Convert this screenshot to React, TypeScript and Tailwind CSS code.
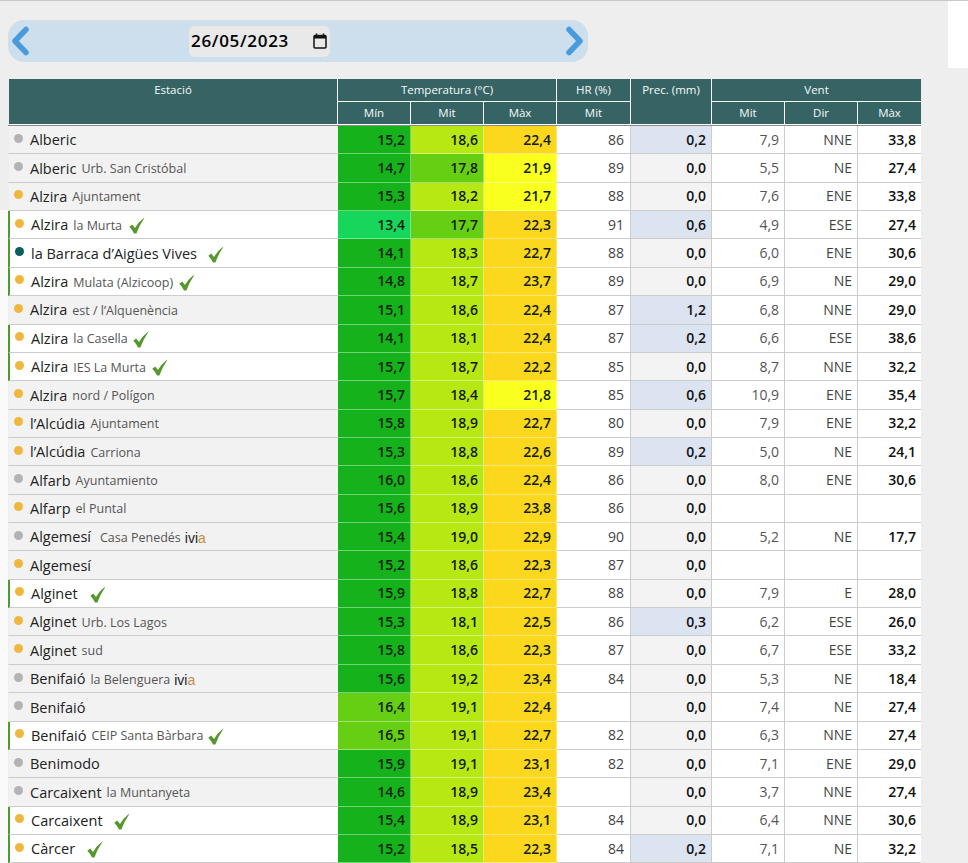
const rows: [string, string, string, boolean, string, string, string, string, string, string, string, string, string, string?][] = [
  ['Alberic', '', 'g', false, '15,2', '18,6', '22,4', '86', '0,2', '7,9', 'NNE', '33,8'],
  ['Alberic', 'Urb. San Cristóbal', 'g', false, '14,7', '17,8', '21,9', '89', '0,0', '5,5', 'NE', '27,4'],
  ['Alzira', 'Ajuntament', 'o', false, '15,3', '18,2', '21,7', '88', '0,0', '7,6', 'ENE', '33,8'],
  ['Alzira', 'la Murta', 'o', true, '13,4', '17,7', '22,3', '91', '0,6', '4,9', 'ESE', '27,4', 'ml-[7px]'],
  ['la Barraca d’Aigües Vives', '', 't', true, '14,1', '18,3', '22,7', '88', '0,0', '6,0', 'ENE', '30,6', 'ml-[11px]'],
  ['Alzira', 'Mulata (Alzicoop)', 'o', true, '14,8', '18,7', '23,7', '89', '0,0', '6,9', 'NE', '29,0', 'ml-[6px]'],
  ['Alzira', 'est / l’Alquenència', 'o', false, '15,1', '18,6', '22,4', '87', '1,2', '6,8', 'NNE', '29,0'],
  ['Alzira', 'la Casella', 'o', true, '14,1', '18,1', '22,4', '87', '0,2', '6,6', 'ESE', '38,6', 'ml-[5px]'],
  ['Alzira', 'IES La Murta', 'o', true, '15,7', '18,7', '22,2', '85', '0,0', '8,7', 'NNE', '32,2', 'ml-[6px]'],
  ['Alzira', 'nord / Polígon', 'o', false, '15,7', '18,4', '21,8', '85', '0,6', '10,9', 'ENE', '35,4'],
  ['l’Alcúdia', 'Ajuntament', 'o', false, '15,8', '18,9', '22,7', '80', '0,0', '7,9', 'ENE', '32,2'],
  ['l’Alcúdia', 'Carriona', 'o', false, '15,3', '18,8', '22,6', '89', '0,2', '5,0', 'NE', '24,1'],
  ['Alfarb', 'Ayuntamiento', 'g', false, '16,0', '18,6', '22,4', '86', '0,0', '8,0', 'ENE', '30,6'],
  ['Alfarp', 'el Puntal', 'o', false, '15,6', '18,9', '23,8', '86', '0,0', '', '', ''],
  ['Algemesí', 'Casa Penedés', 'g', false, '15,4', '19,0', '22,9', '90', '0,0', '5,2', 'NE', '17,7'],
  ['Algemesí', '', 'o', false, '15,2', '18,6', '22,3', '87', '0,0', '', '', ''],
  ['Alginet', '', 'o', true, '15,9', '18,8', '22,7', '88', '0,0', '7,9', 'E', '28,0', 'ml-[12px]'],
  ['Alginet', 'Urb. Los Lagos', 'o', false, '15,3', '18,1', '22,5', '86', '0,3', '6,2', 'ESE', '26,0'],
  ['Alginet', 'sud', 'o', false, '15,8', '18,6', '22,3', '87', '0,0', '6,7', 'ESE', '33,2'],
  ['Benifaió', 'la Belenguera', 'g', false, '15,6', '19,2', '23,4', '84', '0,0', '5,3', 'NE', '18,4'],
  ['Benifaió', '', 'g', false, '16,4', '19,1', '22,4', '', '0,0', '7,4', 'NE', '27,4'],
  ['Benifaió', 'CEIP Santa Bàrbara', 'o', true, '16,5', '19,1', '22,7', '82', '0,0', '6,3', 'NNE', '27,4', 'ml-[5px]'],
  ['Benimodo', '', 'g', false, '15,9', '19,1', '23,1', '82', '0,0', '7,1', 'ENE', '29,0'],
  ['Carcaixent', 'la Muntanyeta', 'g', false, '14,6', '18,9', '23,4', '', '0,0', '3,7', 'NNE', '27,4'],
  ['Carcaixent', '', 'o', true, '15,4', '18,9', '23,1', '84', '0,0', '6,4', 'NNE', '30,6', 'ml-[11px]'],
  ['Càrcer', '', 'o', true, '15,2', '18,5', '22,3', '84', '0,2', '7,1', 'NE', '32,2', 'ml-[12px]'],
];

function tempColor(v: string) {
  const n = parseFloat(v.replace(',', '.'));
  if (n < 14) return 'bg-[#17d65c]';
  if (n < 16.2) return 'bg-[#16b21b]';
  if (n < 18) return 'bg-[#66cf14]';
  if (n < 20) return 'bg-[#b8e814]';
  if (n < 22) return 'bg-[#f9ff1f]';
  return 'bg-[#fbd71e]';
}

function dotColor(d: string) {
  if (d === 'g') return 'bg-[#b3b3b3]';
  if (d === 't') return 'bg-[#075f5f]';
  return 'bg-[#efb73e]';
}

function Check({ className }: { className: string }) {
  return (
    <svg viewBox="0 0 16 17" className={`mt-[2px] h-[17px] w-4 shrink-0 ${className}`}>
      <path d="M0.3 9.8 L3.2 7.6 L6 11 Q9.5 5 14.6 1 L15 1.4 Q10.5 8 7.4 16.4 L5 16.4 Q3 12.5 0.3 9.8 Z" fill="#56982c" />
      <path d="M14.4 1.2 L15.8 0.2 L15 1.6 Z" fill="#b5c9a6" />
    </svg>
  );
}

const th = 'border-r border-b border-white bg-[#366465] bg-clip-padding font-normal text-[11.5px] text-[#f6f9f9] align-middle';
const cell = 'border-r border-b border-[#cccccc] px-[5px] text-right';
const temp = 'border-r border-b border-white/40 px-[5px] text-right font-semibold text-[#102010]';

export default function App() {
  return (
    <div className="relative h-[863px] overflow-hidden border-t border-[#c9c9c9] bg-[#eeeeee] font-['Open_Sans',sans-serif]">
      <div className="flex h-[67px] items-start justify-between">
        <div className="mt-[19px] ml-2 flex h-[42px] w-[580px] items-center rounded-[16px] bg-[#cddfec] pr-[4px] pl-[3px]">
          <svg viewBox="0 0 18 30" className="h-[30px] w-[18px]">
            <path d="M15 3.5 L4 15 L15 26.5" fill="none" stroke="#4a9bdb" strokeWidth="5.5" strokeLinecap="round" strokeLinejoin="round" />
          </svg>
          <div className="ml-[160px] flex h-[31px] w-[141px] items-center justify-between rounded-[6px] bg-[#e9e9e9] pr-[3px] pl-[2px] text-[17px] font-semibold tracking-[0.7px] text-black">
            <span>26/05/2023</span>
            <svg viewBox="0 0 14 16" className="h-[16px] w-[14px]">
              <path d="M3.5 0.5 V3 M10.5 0.5 V3" stroke="#111" strokeWidth="1.5" />
              <rect x="1" y="2.5" width="12" height="12.5" rx="1" fill="none" stroke="#111" strokeWidth="1.5" />
              <rect x="1" y="2.5" width="12" height="3" fill="#111" />
            </svg>
          </div>
          <svg viewBox="0 0 18 30" className="ml-auto h-[30px] w-[18px]">
            <path d="M3 3.5 L14 15 L3 26.5" fill="none" stroke="#4a9bdb" strokeWidth="5.5" strokeLinecap="round" strokeLinejoin="round" />
          </svg>
        </div>
        <div className="h-[67px] w-5 bg-white" />
      </div>

      <div className="absolute top-[209px] bottom-0 left-0 w-2 bg-[#fafafa]" />

      <table className="relative mt-[11px] ml-2 w-[913px] table-fixed border-separate border-spacing-0 text-sm text-[#333]">
        <colgroup>
          <col className="w-[330px]" />
          <col className="w-[73px]" />
          <col className="w-[73px]" />
          <col className="w-[73px]" />
          <col className="w-[74px]" />
          <col className="w-[81px]" />
          <col className="w-[73px]" />
          <col className="w-[73px]" />
          <col className="w-[63px]" />
        </colgroup>
        <thead>
          <tr className="h-[23px]">
            <th rowSpan={2} className={`${th} border-l border-l-transparent pb-[23px]`}>Estació</th>
            <th colSpan={3} className={th}>Temperatura (°C)</th>
            <th className={th}>HR (%)</th>
            <th rowSpan={2} className={`${th} pb-[23px]`}>Prec. (mm)</th>
            <th colSpan={3} className={`${th} border-r-0`}>Vent</th>
          </tr>
          <tr className="h-[23px]">
            <th className={th}>Mín</th>
            <th className={th}>Mit</th>
            <th className={th}>Màx</th>
            <th className={th}>Mit</th>
            <th className={th}>Mit</th>
            <th className={th}>Dir</th>
            <th className={`${th} border-r-0`}>Màx</th>
          </tr>
          <tr className="h-px">
            <th colSpan={9} className="bg-[#8a8a8a] p-0" />
          </tr>
        </thead>
        <tbody>
          {rows.map((r, i) => {
            const [name, sub, dot, active, min, mit, max, hr, prec, vm, dir, vx, gap] = r;
            const wet = prec !== '0,0';
            return (
              <tr key={i} className="h-[28.36px]">
                <td
                  className={`border-b border-[#cccccc] p-0 ${
                    active ? 'border-l-2 border-l-[#4e9a2a] bg-white' : 'border-l border-l-transparent bg-[#f2f2f2] bg-clip-padding'
                  }`}
                >
                  <div className="flex items-center pl-[5px] whitespace-nowrap">
                    <span className={`mb-[3px] h-[9px] w-[9px] shrink-0 rounded-full ${dotColor(dot)}`} />
                    <span className="ml-[7px] pt-[2px] text-[14.5px] text-[#222]">{name}</span>
                    {sub && (
                      <span className={`pt-[2px] text-[12.5px] text-[#555] ${name === 'Algemesí' ? 'ml-[9px]' : 'ml-[5px]'}`}>
                        {sub}
                      </span>
                    )}
                    {(name === 'Algemesí' || name === 'Benifaió') && sub && !active && (
                      <span className="ml-1 pt-[2px] font-['Liberation_Sans',sans-serif] text-[14px] text-[#222]">
                        ivi<span className="text-[#c98a45]">a</span>
                      </span>
                    )}
                    {active && <Check className={gap ?? 'ml-[6px]'} />}
                  </div>
                </td>
                <td className={`${temp} ${tempColor(min)}`}>{min}</td>
                <td className={`${temp} ${tempColor(mit)}`}>{mit}</td>
                <td className={`${temp} ${tempColor(max)}`}>{max}</td>
                <td className={`${cell} bg-white pr-[6px] text-[#444]`}>{hr}</td>
                <td className={`${cell} font-semibold text-[#111] ${wet ? 'bg-[#dce4f2]' : 'bg-[#f3f3f3]'}`}>{prec}</td>
                <td className={`${cell} bg-white text-[#555]`}>{vm}</td>
                <td className={`${cell} bg-white text-[#444]`}>{dir}</td>
                <td className="border-b border-[#cccccc] bg-white px-[5px] text-right font-semibold text-[#111]">{vx}</td>
              </tr>
            );
          })}
        </tbody>
      </table>
    </div>
  );
}
